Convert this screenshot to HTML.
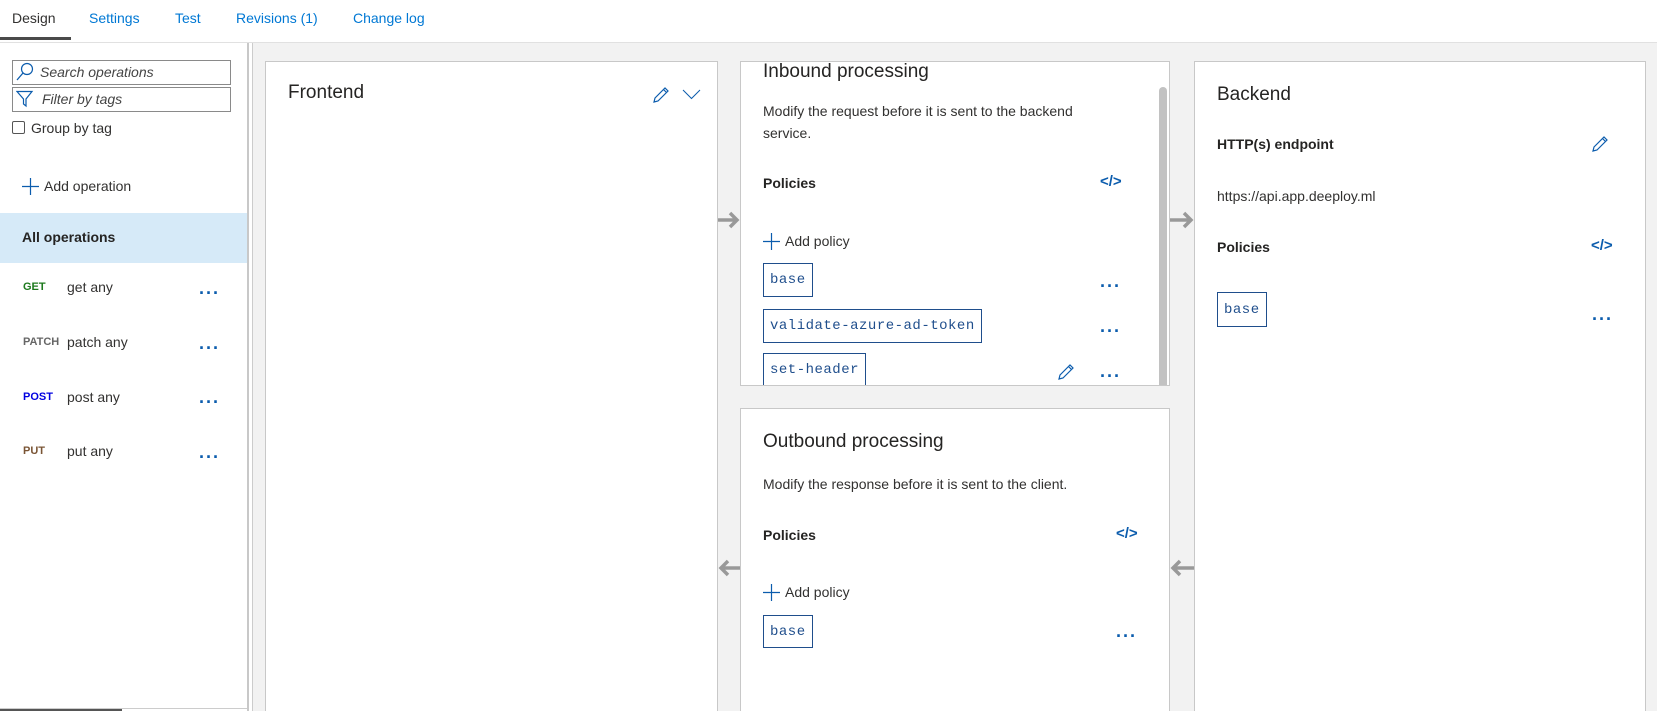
<!DOCTYPE html>
<html><head><meta charset="utf-8"><style>
*{margin:0;padding:0;box-sizing:border-box}
html,body{width:1657px;height:711px;overflow:hidden}
body{background:#fff;font-family:"Liberation Sans",sans-serif;color:#323130;font-size:14px;position:relative}
.a{position:absolute;white-space:nowrap}
.tab{position:absolute;top:10px;font-size:14px;color:#0078d4}
.panel{position:absolute;background:#fff;border:1px solid #c8c8c8}
.h{font-size:19px;color:#252423}
.b{font-weight:bold;color:#252423;font-size:14px}
.code{position:absolute;border:1.5px solid #1f4e8c;color:#1f4e8c;font-family:"Liberation Mono",monospace;font-size:14px;padding:0 6px;height:34px;letter-spacing:0.5px;display:flex;align-items:center}
.dots{position:absolute;color:#0b5cad;font-size:18px;font-weight:bold;letter-spacing:1px;line-height:10px}
.m{position:absolute;font-size:11px;font-weight:bold}
</style></head><body>
<!-- tabs -->
<div class="tab" style="left:12px;color:#323130">Design</div>
<div class="tab" style="left:89px">Settings</div>
<div class="tab" style="left:175px">Test</div>
<div class="tab" style="left:236px">Revisions (1)</div>
<div class="tab" style="left:353px">Change log</div>
<div class="a" style="left:0;top:37px;width:71px;height:3px;background:#4a4a4a"></div>
<div class="a" style="left:0;top:42px;width:1657px;height:1px;background:#e1e1e1"></div>

<!-- sidebar -->
<div class="a" style="left:12px;top:60px;width:219px;height:25px;border:1px solid #8a8a8a"></div>
<svg class="a" style="left:15px;top:62px" width="20" height="20" viewBox="0 0 20 20"><circle cx="12" cy="7" r="5.5" fill="none" stroke="#0b5cad" stroke-width="1.2"/><path d="M8 11 L2 18" stroke="#0b5cad" stroke-width="1.3"/></svg>
<div class="a" style="left:40px;top:64px;font-style:italic;color:#444">Search operations</div>
<div class="a" style="left:12px;top:87px;width:219px;height:25px;border:1px solid #8a8a8a"></div>
<svg class="a" style="left:16px;top:90px" width="18" height="18" viewBox="0 0 18 18"><path d="M1 1.5 H16 L10 9 V16 L7.5 14 V9 Z" fill="none" stroke="#0b5cad" stroke-width="1.2"/></svg>
<div class="a" style="left:42px;top:91px;font-style:italic;color:#444">Filter by tags</div>
<div class="a" style="left:12px;top:121px;width:13px;height:13px;border:1px solid #555;border-radius:2px"></div>
<div class="a" style="left:31px;top:120px">Group by tag</div>
<svg class="a" style="left:22px;top:178px" width="17" height="17"><path d="M8.5 0V17M0 8.5H17" stroke="#0b5cad" stroke-width="1.2"/></svg>
<div class="a" style="left:44px;top:178px">Add operation</div>
<div class="a" style="left:0;top:213px;width:247px;height:50px;background:#d6eaf8"></div>
<div class="a b" style="left:22px;top:229px">All operations</div>
<div class="m" style="left:23px;top:281px;color:#1e7a1e">GET</div><div class="a" style="left:67px;top:279px">get any</div>
<div class="m" style="left:23px;top:336px;color:#666">PATCH</div><div class="a" style="left:67px;top:334px">patch any</div>
<div class="m" style="left:23px;top:391px;color:#0000e0">POST</div><div class="a" style="left:67px;top:389px">post any</div>
<div class="m" style="left:23px;top:445px;color:#7a5535">PUT</div><div class="a" style="left:67px;top:443px">put any</div>
<div class="dots" style="left:199px;top:288px">···</div>
<div class="dots" style="left:199px;top:343px">···</div>
<div class="dots" style="left:199px;top:397px">···</div>
<div class="dots" style="left:199px;top:452px">···</div>
<div class="a" style="left:0;top:708px;width:247px;height:1px;background:#ccc"></div>
<div class="a" style="left:0;top:709px;width:122px;height:2px;background:#555"></div>
<div class="a" style="left:247px;top:43px;width:2px;height:668px;background:#c8c8c8"></div>

<!-- canvas -->
<div class="a" style="left:252px;top:43px;width:1405px;height:668px;background:#f2f2f2;border-left:1px solid #ccc"></div>

<!-- frontend -->
<div class="panel" style="left:265px;top:61px;width:453px;height:650px;border-bottom:none"></div>
<div class="a h" style="left:288px;top:82px">Frontend</div>
<svg class="a" style="left:652px;top:86px" width="18" height="18" viewBox="0 0 18 18"><path d="M2 16 L3 12 L13 2 L16 5 L6 15 Z M11.5 3.5 L14.5 6.5" fill="none" stroke="#0b5cad" stroke-width="1.2"/></svg>
<svg class="a" style="left:682px;top:89px" width="19" height="11"><path d="M1 1 L9.5 9.5 L18 1" fill="none" stroke="#0b5cad" stroke-width="1"/></svg>

<!-- arrows -->
<svg class="a" style="left:718px;top:211px" width="22" height="18"><path d="M0 9H19M12 2L19 9L12 16" fill="none" stroke="#999" stroke-width="3.5"/></svg>
<svg class="a" style="left:1170px;top:211px" width="24" height="18"><path d="M0 9H21M14 2L21 9L14 16" fill="none" stroke="#999" stroke-width="3.5"/></svg>
<svg class="a" style="left:718px;top:559px" width="22" height="18"><path d="M22 9H3M10 2L3 9L10 16" fill="none" stroke="#999" stroke-width="3.5"/></svg>
<svg class="a" style="left:1170px;top:559px" width="24" height="18"><path d="M24 9H3M10 2L3 9L10 16" fill="none" stroke="#999" stroke-width="3.5"/></svg>

<!-- inbound -->
<div class="panel" style="left:740px;top:61px;width:430px;height:325px;overflow:hidden">
  <div class="a h" style="left:22px;top:-1px">Inbound processing</div>
  <div class="a" style="left:22px;top:38px;line-height:22px;white-space:normal;width:330px">Modify the request before it is sent to the backend service.</div>
  <div class="a b" style="left:22px;top:113px">Policies</div>
  <div class="a" style="left:359px;top:111px;color:#0b5cad;font-weight:bold;font-size:15px">&lt;/&gt;</div>
  <svg class="a" style="left:22px;top:171px" width="17" height="17"><path d="M8.5 0V17M0 8.5H17" stroke="#0b5cad" stroke-width="1.2"/></svg>
  <div class="a" style="left:44px;top:171px">Add policy</div>
  <div class="code" style="left:22px;top:201px">base</div>
  <div class="code" style="left:22px;top:247px">validate-azure-ad-token</div>
  <div class="code" style="left:22px;top:291px">set-header</div>
  <div class="dots" style="left:359px;top:219px">···</div>
  <div class="dots" style="left:359px;top:264px">···</div>
  <div class="dots" style="left:359px;top:309px">···</div>
  <svg class="a" style="left:316px;top:301px" width="18" height="18" viewBox="0 0 18 18"><path d="M2 16 L3 12 L13 2 L16 5 L6 15 Z M11.5 3.5 L14.5 6.5" fill="none" stroke="#0b5cad" stroke-width="1.2"/></svg>
  <div class="a" style="left:418px;top:25px;width:8px;height:320px;background:#c2c2c2;border-radius:4px"></div>
</div>

<!-- outbound -->
<div class="panel" style="left:740px;top:408px;width:430px;height:303px;border-bottom:none">
  <div class="a h" style="left:22px;top:22px">Outbound processing</div>
  <div class="a" style="left:22px;top:67px">Modify the response before it is sent to the client.</div>
  <div class="a b" style="left:22px;top:118px">Policies</div>
  <div class="a" style="left:375px;top:116px;color:#0b5cad;font-weight:bold;font-size:15px">&lt;/&gt;</div>
  <svg class="a" style="left:22px;top:175px" width="17" height="17"><path d="M8.5 0V17M0 8.5H17" stroke="#0b5cad" stroke-width="1.2"/></svg>
  <div class="a" style="left:44px;top:175px">Add policy</div>
  <div class="code" style="left:22px;top:206px;height:33px">base</div>
  <div class="dots" style="left:375px;top:222px">···</div>
</div>

<!-- backend -->
<div class="panel" style="left:1194px;top:61px;width:452px;height:650px;border-bottom:none">
  <div class="a h" style="left:22px;top:22px">Backend</div>
  <div class="a b" style="left:22px;top:74px">HTTP(s) endpoint</div>
  <svg class="a" style="left:396px;top:73px" width="18" height="18" viewBox="0 0 18 18"><path d="M2 16 L3 12 L13 2 L16 5 L6 15 Z M11.5 3.5 L14.5 6.5" fill="none" stroke="#0b5cad" stroke-width="1.2"/></svg>
  <div class="a" style="left:22px;top:126px">https://api.app.deeploy.ml</div>
  <div class="a b" style="left:22px;top:177px">Policies</div>
  <div class="a" style="left:396px;top:175px;color:#0b5cad;font-weight:bold;font-size:15px">&lt;/&gt;</div>
  <div class="code" style="left:22px;top:230px;height:35px">base</div>
  <div class="dots" style="left:397px;top:252px">···</div>
</div>
</body></html>
